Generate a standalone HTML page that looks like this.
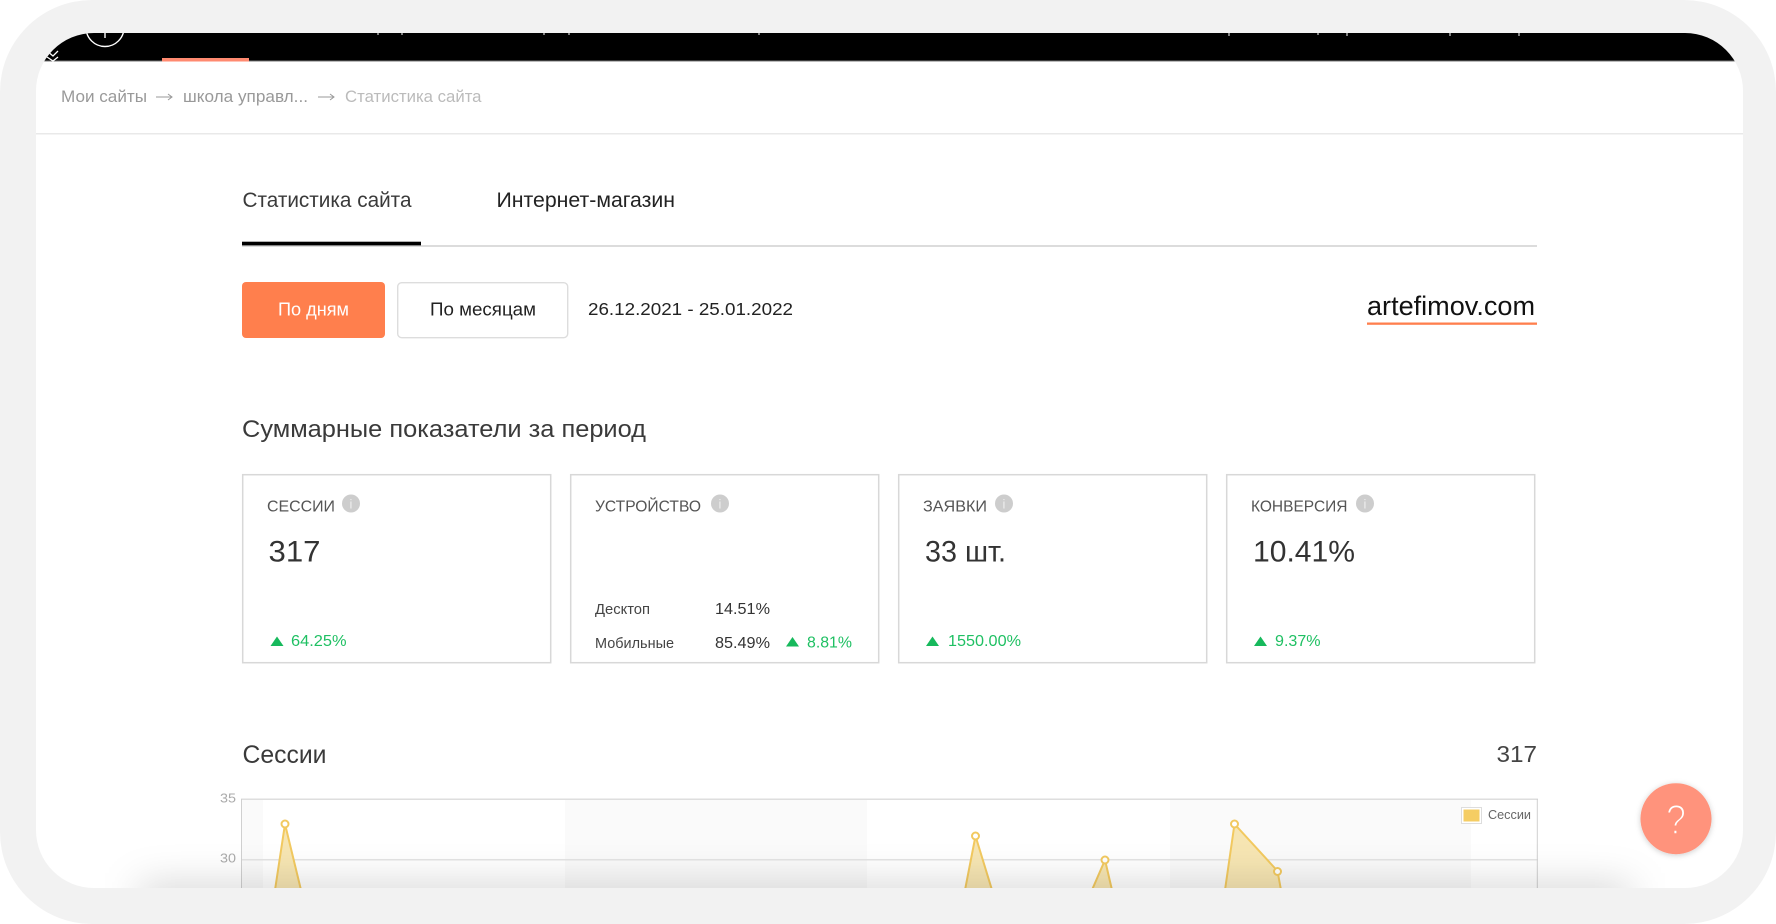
<!DOCTYPE html>
<html lang="ru">
<head>
<meta charset="utf-8">
<title>Статистика сайта</title>
<style>
html,body{margin:0;padding:0;background:#fff;width:1776px;height:924px;overflow:hidden}
svg{display:block}
text{font-family:"Liberation Sans","DejaVu Sans",sans-serif}
</style>
</head>
<body>
<svg xmlns="http://www.w3.org/2000/svg" width="1776" height="924" viewBox="0 0 1776 924">
<defs>
<clipPath id="screen"><rect x="36" y="33" width="1707" height="855" rx="58" ry="58"/></clipPath>
<filter id="blur" x="-10%" y="-300%" width="120%" height="700%"><feGaussianBlur stdDeviation="20"/></filter>
<filter id="btn" x="-30%" y="-30%" width="160%" height="160%"><feDropShadow dx="0" dy="1" stdDeviation="3" flood-color="#000" flood-opacity=".2"/></filter>
</defs>
<rect width="1776" height="924" rx="92" ry="92" fill="#f2f2f2"/>
<g clip-path="url(#screen)">
<rect x="36" y="33" width="1707" height="855" fill="#fff"/>
<rect x="36" y="33" width="1707" height="28" fill="#000"/>
<rect x="36" y="60.500" width="1707" height="1" fill="#777"/>
<rect x="162" y="58" width="87" height="3.500" fill="#ff8a70"/>
<circle cx="105" cy="27.500" r="19" fill="none" stroke="#fff" stroke-width="1.400"/>
<path d="M105 33v5" stroke="#fff" stroke-width="1.400"/>
<path d="M47 51l6 5 5-5M47 57l6 4 5-4" fill="none" stroke="#fff" stroke-width="1.300"/>
<g stroke="#fff" stroke-width="1"><path d="M378 33v2M402 33v2M544 33v2M569 33v2M759 33v2M1229 33v3M1318 33v2M1347 33v3M1450 33v3M1519 33v3"/></g>

<!-- breadcrumb -->
<text x="61" y="102" font-size="17" fill="#999" textLength="86" lengthAdjust="spacingAndGlyphs">Мои сайты</text>
<path d="M156 97h16M168 94l4 3-4 3" fill="none" stroke="#999" stroke-width="1"/>
<text x="183" y="102" font-size="17" fill="#999" textLength="125" lengthAdjust="spacingAndGlyphs">школа управл...</text>
<path d="M318 97h16M330 94l4 3-4 3" fill="none" stroke="#999" stroke-width="1"/>
<text x="345" y="102" font-size="17" fill="#bbb" textLength="136.500" lengthAdjust="spacingAndGlyphs">Статистика сайта</text>
<rect x="36" y="133" width="1707" height="1.500" fill="#e9e9e9"/>

<!-- tabs -->
<text x="242.500" y="207" font-size="21" fill="#3a3a3a" textLength="169" lengthAdjust="spacingAndGlyphs">Статистика сайта</text>
<text x="496.500" y="207" font-size="21" fill="#222" textLength="178.500" lengthAdjust="spacingAndGlyphs">Интернет-магазин</text>
<rect x="242" y="245" width="1295" height="2" fill="#dcdcdc"/>
<rect x="242" y="241.700" width="179" height="3.700" fill="#000"/>

<!-- controls -->
<rect x="242" y="282" width="143" height="56" rx="4" fill="#ff7f4d"/>
<text x="278" y="315.500" font-size="18" fill="#fff" textLength="71" lengthAdjust="spacingAndGlyphs">По дням</text>
<rect x="397.700" y="282.700" width="170" height="55" rx="4" fill="#fff" stroke="#ddd" stroke-width="1.400"/>
<text x="430" y="315.500" font-size="18" fill="#222" textLength="106" lengthAdjust="spacingAndGlyphs">По месяцам</text>
<text x="588" y="315" font-size="17.500" fill="#222" textLength="205" lengthAdjust="spacingAndGlyphs">26.12.2021 - 25.01.2022</text>
<text x="1367" y="315" font-size="27" fill="#111" textLength="168" lengthAdjust="spacingAndGlyphs">artefimov.com</text>
<rect x="1367" y="322.500" width="170" height="2.300" fill="#ff7f4d"/>

<!-- summary -->
<text x="242" y="437" font-size="24" fill="#3a3a3a" textLength="404" lengthAdjust="spacingAndGlyphs">Суммарные показатели за период</text>

<g fill="#fff" stroke="#d8d8d8" stroke-width="1.500">
<rect x="242.700" y="474.700" width="308" height="188"/>
<rect x="570.700" y="474.700" width="308" height="188"/>
<rect x="898.700" y="474.700" width="308" height="188"/>
<rect x="1226.700" y="474.700" width="308" height="188"/>
</g>

<!-- card labels -->
<text x="267" y="511.500" font-size="15.500" fill="#555" textLength="68" lengthAdjust="spacingAndGlyphs">СЕССИИ</text>
<text x="595" y="511.500" font-size="15.500" fill="#555" textLength="106" lengthAdjust="spacingAndGlyphs">УСТРОЙСТВО</text>
<text x="923" y="511.500" font-size="15.500" fill="#555" textLength="64" lengthAdjust="spacingAndGlyphs">ЗАЯВКИ</text>
<text x="1251" y="511.500" font-size="15.500" fill="#555" textLength="96.500" lengthAdjust="spacingAndGlyphs">КОНВЕРСИЯ</text>

<!-- info icons -->
<g fill="#cdcdcd">
<circle cx="351" cy="503.500" r="9"/><circle cx="720" cy="503.500" r="9"/><circle cx="1004" cy="503.500" r="9"/><circle cx="1365" cy="503.500" r="9"/>
</g>
<g fill="#eee" font-size="13" text-anchor="middle">
<text x="351" y="508.500">i</text><text x="720" y="508.500">i</text><text x="1004" y="508.500">i</text><text x="1365" y="508.500">i</text>
</g>

<!-- card values -->
<text x="268.500" y="561.500" font-size="30" fill="#333" textLength="52" lengthAdjust="spacingAndGlyphs">317</text>
<text x="925" y="561.500" font-size="30" fill="#333" textLength="81" lengthAdjust="spacingAndGlyphs">33 шт.</text>
<text x="1253" y="561.500" font-size="30" fill="#333" textLength="102" lengthAdjust="spacingAndGlyphs">10.41%</text>

<g fill="#16b95c">
<path d="M277 636.500l6.500 9.500h-13z"/>
<path d="M792.500 637l6.500 9.500h-13z"/>
<path d="M932.500 636.500l6.500 9.500h-13z"/>
<path d="M1260.500 636.500l6.500 9.500h-13z"/>
</g>
<g fill="#1fc063" font-size="16">
<text x="291" y="646" textLength="55.500" lengthAdjust="spacingAndGlyphs">64.25%</text>
<text x="807" y="647.500" textLength="45" lengthAdjust="spacingAndGlyphs">8.81%</text>
<text x="948" y="646" textLength="73" lengthAdjust="spacingAndGlyphs">1550.00%</text>
<text x="1275" y="646" textLength="45.600" lengthAdjust="spacingAndGlyphs">9.37%</text>
</g>
<text x="595" y="614" font-size="15" fill="#444" textLength="55" lengthAdjust="spacingAndGlyphs">Десктоп</text>
<text x="715" y="614" font-size="16" fill="#333" textLength="55" lengthAdjust="spacingAndGlyphs">14.51%</text>
<text x="595" y="648" font-size="15" fill="#444" textLength="79" lengthAdjust="spacingAndGlyphs">Мобильные</text>
<text x="715" y="648" font-size="16" fill="#333" textLength="55" lengthAdjust="spacingAndGlyphs">85.49%</text>

<!-- sessions -->
<text x="242.500" y="763" font-size="25" fill="#3a3a3a" textLength="84" lengthAdjust="spacingAndGlyphs">Сессии</text>
<text x="1496.500" y="762" font-size="23" fill="#444" textLength="40.500" lengthAdjust="spacingAndGlyphs">317</text>

<!-- chart -->
<rect x="241" y="799" width="22" height="90" fill="#fafafa"/>
<rect x="565" y="799" width="302" height="90" fill="#fafafa"/>
<rect x="1170" y="799" width="301" height="90" fill="#fafafa"/>
<rect x="241" y="798.500" width="1297" height="1.500" fill="#dedede"/>
<rect x="241" y="859" width="1297" height="1.500" fill="#e4e4e4"/>
<rect x="241" y="799" width="1" height="90" fill="#d0d0d0"/>
<rect x="1536.800" y="799" width="1" height="90" fill="#d0d0d0"/>
<text x="220" y="802.500" font-size="13" fill="#aaa" textLength="16" lengthAdjust="spacingAndGlyphs">35</text>
<text x="220" y="862.500" font-size="13" fill="#aaa" textLength="16" lengthAdjust="spacingAndGlyphs">30</text>

<g fill="#f6e5b2" stroke="#f2c95f" stroke-width="2" stroke-linejoin="round">
<path d="M285 824L275 890H301z"/>
<path d="M975.500 836L965 890H992z"/>
<path d="M1105 860L1092 890H1112z"/>
<path d="M1234.500 824L1277.500 871L1281 890H1225z"/>
</g>
<g fill="#fff" stroke="#f2c95f" stroke-width="2">
<circle cx="285" cy="824" r="3.500"/>
<circle cx="975.500" cy="836" r="3.500"/>
<circle cx="1105" cy="860" r="3.500"/>
<circle cx="1234.500" cy="824" r="3.500"/>
<circle cx="1277.500" cy="871.500" r="3.500"/>
</g>
<rect x="1461.500" y="807.500" width="20" height="16" fill="#fff" stroke="#ddd" stroke-width="1"/>
<rect x="1463.500" y="809.500" width="16" height="12" fill="#f5cd63"/>
<text x="1488" y="819" font-size="13" fill="#666" textLength="43" lengthAdjust="spacingAndGlyphs">Сессии</text>

<!-- device shadow -->
<rect x="140" y="886" width="1490" height="30" fill="#000" fill-opacity=".19" filter="url(#blur)"/>
</g>

<!-- help button -->
<circle cx="1676" cy="818.700" r="35.500" fill="#ff937b" filter="url(#btn)"/>
<text x="1676" y="834" font-size="42" fill="#fff" stroke="#ff937b" stroke-width="1.600" text-anchor="middle" textLength="20" lengthAdjust="spacingAndGlyphs">?</text>
</svg>
</body>
</html>
